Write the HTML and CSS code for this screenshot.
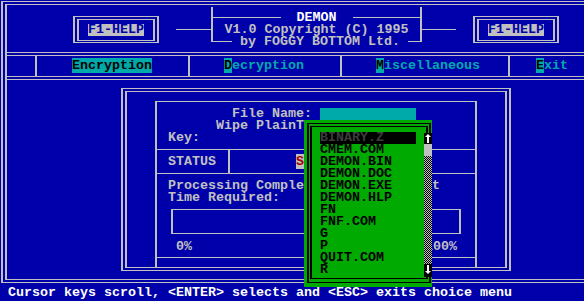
FILE: index.html
```html
<!DOCTYPE html>
<html lang="en">
<head>
    <meta charset="utf-8">
    <meta name="viewport" content="width=device-width, initial-scale=1.0">
    <link rel="stylesheet" href="styles.css">
    <title>DEMON</title>
</head>

<body>
    <div class="screen">
        <div class="frame-inner">
            <header class="top">
                <div class="help-box">
                    <div class="help-inner"><span class="help-key">F1-HELP</span></div>
                </div>
                <div class="wire wire-left"></div>
                <div class="title">
                    <div class="title-row"><span class="rule"></span><span class="name">DEMON</span><span class="rule"></span></div>
                    <div class="title-row center"><span>V1.0 Copyright (C) 1995</span></div>
                    <div class="title-row"><span class="rule short"></span><span class="by">by FOGGY BOTTOM Ltd.</span><span class="rule"></span></div>
                </div>
                <div class="wire wire-right"></div>
                <div class="help-box">
                    <div class="help-inner"><span class="help-key">F1-HELP</span></div>
                </div>
            </header>

            <nav class="menu">
                <div class="menu-cell first"></div>
                <div class="menu-cell enc"><span class="sel">Encryption</span></div>
                <div class="menu-cell dec"><span class="hot">D</span>ecryption</div>
                <div class="menu-cell misc"><span class="hot">M</span>iscellaneous</div>
                <div class="menu-cell exit"><span class="hot">E</span>xit</div>
            </nav>

            <main class="work">
                <div class="dialog">
                    <div class="dialog-inner">
                        <div class="panel">
                            <div class="fields">
                                <div class="field-row fname"><span>File Name:</span><span class="input"></span></div>
                                <div class="field-row wipe"><span>Wipe PlainText: N</span></div>
                                <div class="field-row"><span>Key:</span></div>
                            </div>
                            <div class="status">
                                <div class="status-label">STATUS</div>
                                <div class="status-value"><span class="alert">Select File Name</span></div>
                            </div>
                            <div class="progress">
                                <div class="line">Processing Complete:     0 Percent</div>
                                <div class="line">Time Required:</div>
                                <div class="bar"></div>
                                <div class="scale"><span>0%</span><span>100%</span></div>
                            </div>
                        </div>
                    </div>
                </div>
            </main>
        </div>
    </div>

    <div class="hint">Cursor keys scroll, &lt;ENTER&gt; selects and &lt;ESC&gt; exits choice menu</div>

    <div class="picker">
        <div class="picker-frame">
            <div class="picker-inner">
                <div class="pick current">BINARY.Z</div>
                <div class="pick">CMEM.COM</div>
                <div class="pick">DEMON.BIN</div>
                <div class="pick">DEMON.DOC</div>
                <div class="pick">DEMON.EXE</div>
                <div class="pick">DEMON.HLP</div>
                <div class="pick">FN</div>
                <div class="pick">FNF.COM</div>
                <div class="pick">G</div>
                <div class="pick">P</div>
                <div class="pick">QUIT.COM</div>
                <div class="pick">R</div>
            </div>
        </div>
        <div class="scrollbar">
            <div class="arrow up">
                <svg width="8" height="11" viewBox="0 0 8 11"><path d="M4 1 L1 4 L7 4 Z" fill="#fff"/><rect x="3" y="4" width="2" height="6" fill="#fff"/></svg>
            </div>
            <div class="thumb"></div>
            <div class="track"></div>
            <div class="arrow down">
                <svg width="8" height="11" viewBox="0 0 8 11"><rect x="3" y="1" width="2" height="6" fill="#fff"/><path d="M4 10 L1 7 L7 7 Z" fill="#fff"/></svg>
            </div>
        </div>
    </div>
</body>

</html>
```

FILE: styles.css
```css
body {
    margin: 0;
    width: 584px;
    height: 301px;
    overflow: hidden;
    background-color: #0000aa;
    color: #c0c0c0;
    font-family: "Liberation Mono", monospace;
    font-size: 13.333px;
    font-weight: bold;
    line-height: 12px;
}

/* double frame round the whole screen */
.screen {
    margin: 1px 0 0 1px;
    border: solid #c0c0c0;
    border-width: 1px 0 1px 2px;
    padding: 2px 0 2px 2px;
}

.frame-inner {
    border: solid #c0c0c0;
    border-width: 1px 0 1px 2px;
    height: 274px;
}

.top {
    display: flex;
    align-items: flex-start;
    height: 47px;
    border-bottom: 1px solid #c0c0c0;
}

.help-box {
    flex-shrink: 0;
    box-sizing: border-box;
    width: 86px;
    height: 27px;
    margin-top: 11px;
    margin-left: 66px;
    border: solid #c0c0c0;
    border-width: 1px 2px;
    padding: 2px 2px 1px 2px;
}

.help-box:last-child {
    margin-left: 17px;
}

.help-inner {
    display: flex;
    align-items: center;
    justify-content: center;
    height: 20px;
    border: solid #c0c0c0;
    border-width: 1px 2px;
}

.help-key {
    background-color: #c0c0c0;
    color: #0000aa;
}

.wire {
    flex-shrink: 0;
    height: 1px;
    margin-top: 24px;
    background-color: #c0c0c0;
}

.wire-left {
    width: 35px;
    margin-left: 17px;
}

.wire-right {
    width: 34px;
}

.title {
    flex-shrink: 0;
    box-sizing: border-box;
    width: 211px;
    height: 35px;
    margin-top: 2px;
    border-left: 2px solid #c0c0c0;
    border-right: 2px solid #c0c0c0;
    padding-top: 5px;
}

.title-row {
    display: flex;
    align-items: flex-start;
    height: 12px;
    white-space: pre;
}

.title-row.center {
    justify-content: center;
}

.rule {
    flex: 1;
    height: 1px;
    margin-top: 5px;
    background-color: #c0c0c0;
}

.rule.short {
    flex: none;
    width: 19px;
}

.name {
    padding: 0 16px;
    color: #ffffff;
}

.by {
    padding: 0 8px;
}

.menu {
    display: flex;
    height: 20px;
    margin-top: 2px;
    border-top: 1px solid #c0c0c0;
    border-bottom: 1px solid #c0c0c0;
    color: #00aaaa;
}

.menu-cell {
    box-sizing: border-box;
    padding-top: 4px;
    border-left: 2px solid #c0c0c0;
    white-space: pre;
}

.menu-cell.first {
    width: 28px;
    border-left: none;
}

.enc {
    width: 153px;
    padding-left: 35px;
}

.dec {
    width: 152px;
    padding-left: 34px;
}

.misc {
    width: 168px;
    padding-left: 34px;
}

.exit {
    flex: 1;
    padding-left: 26px;
}

.sel,
.hot {
    background-color: #00aaaa;
    color: #000000;
}

.work {
    box-sizing: border-box;
    height: 200px;
    margin-top: 2px;
    border-top: 1px solid #c0c0c0;
    padding: 8px 0 0 114px;
}

.dialog {
    box-sizing: border-box;
    width: 390px;
    height: 183px;
    border: solid #c0c0c0;
    border-width: 1px 2px;
    padding: 2px;
}

.dialog-inner {
    box-sizing: border-box;
    height: 177px;
    border: solid #c0c0c0;
    border-width: 1px 2px;
    padding: 9px 0 0 28px;
}

.panel {
    box-sizing: border-box;
    width: 322px;
    height: 166px;
    border: solid #c0c0c0;
    border-width: 1px 2px 0 2px;
}

.fields {
    height: 41px;
    padding: 6px 0 0 11px;
    border-bottom: 1px solid #c0c0c0;
}

.field-row {
    display: flex;
    height: 12px;
    white-space: pre;
}

.fname {
    margin-left: 64px;
}

.wipe {
    margin-left: 48px;
}

.input {
    width: 96px;
    height: 12px;
    margin-left: 8px;
    background-color: #00aaaa;
}

.status {
    display: flex;
    height: 23px;
    border-bottom: 1px solid #c0c0c0;
}

.status-label {
    box-sizing: border-box;
    width: 71px;
    padding: 6px 0 0 11px;
}

.status-value {
    flex: 1;
    border-left: 2px solid #c0c0c0;
    padding: 6px 0 0 66px;
}

.alert {
    background-color: #c0c0c0;
    color: #aa0000;
}

.progress {
    height: 77px;
    padding-top: 6px;
    border-bottom: 1px solid #c0c0c0;
}

.line {
    height: 12px;
    padding-left: 11px;
    white-space: pre;
}

.bar {
    box-sizing: border-box;
    width: 290px;
    height: 25px;
    margin: 5px 0 0 14px;
    border: solid #c0c0c0;
    border-width: 1px 2px;
}

.scale {
    display: flex;
    justify-content: space-between;
    margin-top: 7px;
    padding: 0 18px 0 19px;
}

.hint {
    margin-top: 4px;
    padding-left: 8px;
    color: #ffffff;
    white-space: pre;
}

/* file choice menu, drawn over the dialog */
.picker {
    position: absolute;
    left: 304px;
    top: 120px;
    box-sizing: border-box;
    width: 128px;
    height: 167px;
    padding: 3px 1px 4px 3px;
    background-color: #00aa00;
    color: #000000;
}

.picker-frame {
    box-sizing: border-box;
    height: 160px;
    border: solid #000000;
    border-width: 1px 2px;
    padding: 2px 1px 3px 1px;
}

.picker-inner {
    box-sizing: border-box;
    height: 153px;
    border: solid #000000;
    border-width: 1px 2px;
    padding: 5px 0 0 8px;
}

.pick {
    height: 12px;
}

.pick.current {
    width: 96px;
    background-color: #000000;
    color: #3c3c3c;
}

.scrollbar {
    position: absolute;
    left: 120px;
    top: 13px;
    display: flex;
    flex-direction: column;
    width: 8px;
    height: 144px;
}

.arrow {
    display: flex;
    justify-content: center;
    background-color: #000000;
}

.arrow.up {
    height: 11px;
}

.arrow.down {
    height: 13px;
}

.thumb {
    height: 12px;
    background-color: #c0c0c0;
}

.track {
    flex: 1;
    background: repeating-conic-gradient(#c0c0c0 0 25%, #000000 0 50%) 0 0 / 2px 2px;
}
```
